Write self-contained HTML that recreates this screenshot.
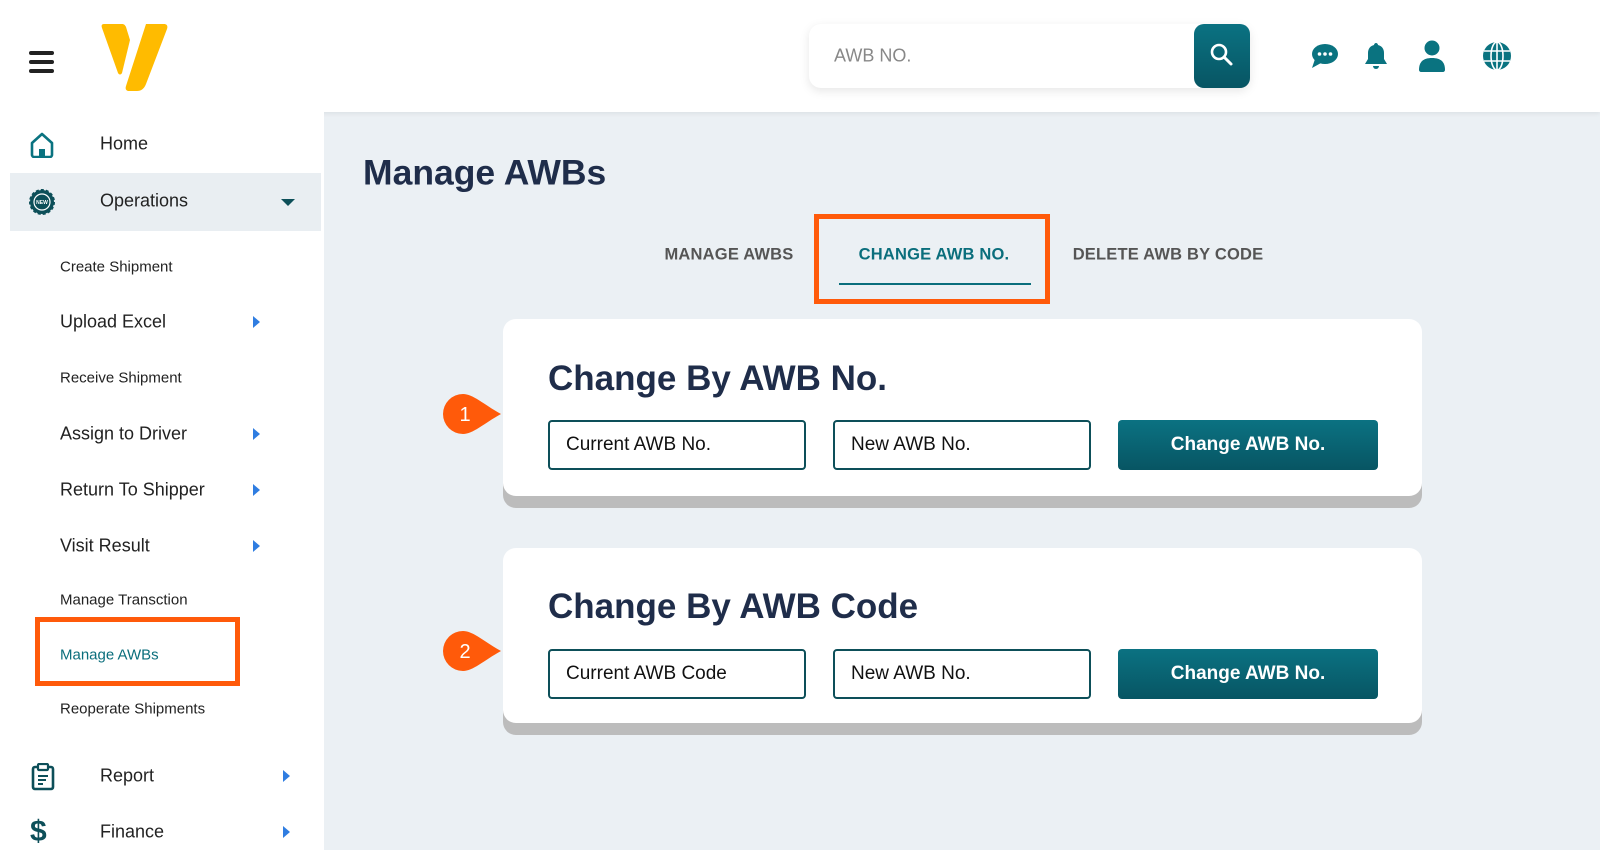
<!DOCTYPE html>
<html><head><meta charset="utf-8"><style>
*{box-sizing:border-box;margin:0;padding:0}
body{width:1600px;height:850px;overflow:hidden;background:#ebf0f4;font-family:"Liberation Sans",sans-serif;position:relative;color:#1e2430}
.abs{position:absolute}
.header{left:0;top:0;width:1600px;height:112px;background:#fff;box-shadow:0 2px 4px rgba(0,0,0,.06)}
.side{left:0;top:112px;width:324px;height:738px;background:#fff}
.sub{position:absolute;left:60px;font-size:15px;color:#222;transform:translateY(-50%)}
.sub.big{font-size:18px}
.arr{position:absolute;left:253px;width:0;height:0;border-top:6px solid transparent;border-bottom:6px solid transparent;border-left:7px solid #2f7de1;transform:translateY(-50%)}
.main{position:absolute;left:100px;font-size:18px;color:#222;transform:translateY(-50%)}
.card{position:absolute;left:503px;width:919px;background:#fff;border-radius:13px;box-shadow:0 12px 0 #bcbcbc}
.ct{position:absolute;left:45px;font-size:35px;font-weight:bold;color:#1f2d4a}
.inp{position:absolute;width:258px;height:50px;border:2px solid #0d4f59;border-radius:4px;font-size:19px;padding-left:16px;line-height:46px;color:#111}
.btn{position:absolute;width:260px;height:50px;border-radius:4px;background:linear-gradient(#0b7282,#075563);color:#fff;font-weight:bold;font-size:19px;text-align:center;line-height:50px}
.tab{position:absolute;top:255px;transform:translate(-50%,-50%);font-size:16.5px;font-weight:bold;color:#555;letter-spacing:.2px}
</style></head><body>
<div class="abs header"></div>
<div class="abs" style="left:29px;top:51px;width:25px;height:4px;background:#222;border-radius:2px"></div>
<div class="abs" style="left:29px;top:60px;width:25px;height:4px;background:#222;border-radius:2px"></div>
<div class="abs" style="left:29px;top:69px;width:25px;height:4px;background:#222;border-radius:2px"></div>
<svg class="abs" style="left:100px;top:22px" width="68" height="70" viewBox="0 0 68 70"><path d="M4 2h18c2 0 3 1 4 3l4 13-8 33c-1 2-3 2-4 0L2 6C1 3 2 2 4 2z" fill="#ffbb00"/><path d="M46 2h18c3 0 4 2 3 5L46 62c-2 5-5 7-9 7H29c-3 0-4-2-3-5z" fill="#ffbb00"/></svg>
<div class="abs" style="left:809px;top:24px;width:441px;height:64px;background:#fff;border-radius:12px;box-shadow:0 3px 10px rgba(0,0,0,.1)"></div>
<div class="abs" style="left:834px;top:56px;transform:translateY(-50%);font-size:18px;color:#888">AWB NO.</div>
<div class="abs" style="left:1194px;top:24px;width:56px;height:64px;border-radius:10px;background:linear-gradient(#0b7282,#075563)"></div>
<svg class="abs" style="left:1209px;top:42px" width="26" height="26" viewBox="0 0 26 26"><circle cx="10" cy="10" r="7" stroke="#fff" stroke-width="2.6" fill="none"/><path d="M15 15l7 7" stroke="#fff" stroke-width="3" stroke-linecap="round"/></svg>
<svg class="abs" style="left:1311px;top:43px" width="28" height="26" viewBox="0 0 28 26"><ellipse cx="14" cy="11" rx="13" ry="10" fill="#0a7380"/><path d="M4 16L1 25 10 20z" fill="#0a7380"/><circle cx="8.5" cy="11" r="1.8" fill="#fff"/><circle cx="14" cy="11" r="1.8" fill="#fff"/><circle cx="19.5" cy="11" r="1.8" fill="#fff"/></svg>
<svg class="abs" style="left:1364px;top:42px" width="24" height="28" viewBox="0 0 24 28"><path d="M12 1c1 0 2 1 2 2 4 1 6 4 6 8v6l3 5H1l3-5v-6c0-4 2-7 6-8 0-1 1-2 2-2z" fill="#0a7380"/><path d="M9 24h6a3 3 0 01-6 0z" fill="#0a7380"/></svg>
<svg class="abs" style="left:1418px;top:40px" width="28" height="32" viewBox="0 0 28 32"><circle cx="14" cy="8" r="7.5" fill="#0a7380"/><path d="M1 30c0-8 4-12 13-12s13 4 13 12c0 1-1 2-2 2H3c-1 0-2-1-2-2z" fill="#0a7380"/></svg>
<svg class="abs" style="left:1482px;top:41px" width="30" height="30" viewBox="0 0 30 30"><circle cx="15" cy="15" r="14" fill="#0a7380"/><g stroke="#fff" stroke-width="1.6" fill="none"><ellipse cx="15" cy="15" rx="6" ry="14"/><path d="M15 1v28M2 10h26M2 20h26"/></g></svg>

<div class="abs side"></div>
<svg class="abs" style="left:29px;top:132px" width="26" height="26" viewBox="0 0 26 26"><path d="M3 11L13 2l10 9v12c0 1-1 2-2 2H5c-1 0-2-1-2-2z" stroke="#0a7380" stroke-width="2.6" fill="none" stroke-linejoin="round"/><rect x="10" y="17" width="6" height="8" fill="#0a7380"/></svg>
<div class="main" style="top:144px">Home</div>
<div class="abs" style="left:10px;top:173px;width:311px;height:58px;background:#e9eef2"></div>
<svg class="abs" style="left:29px;top:189px" width="26" height="26" viewBox="0 0 26 26"><circle cx="13" cy="13" r="12" fill="#0d4f59" stroke="#0d4f59" stroke-width="2" stroke-dasharray="3 2"/><circle cx="13" cy="13" r="8" fill="#0d4f59" stroke="#fff" stroke-width="1.2"/><text x="13" y="15" font-size="5" fill="#fff" text-anchor="middle" font-family="Liberation Sans" font-weight="bold">NEW</text></svg>
<div class="main" style="top:201px">Operations</div>
<div class="abs" style="left:281px;top:199px;border-left:7px solid transparent;border-right:7px solid transparent;border-top:7px solid #0d4f59"></div>
<div class="sub" style="top:267px">Create Shipment</div>
<div class="sub big" style="top:322px">Upload Excel</div><div class="arr" style="top:322px"></div>
<div class="sub" style="top:378px">Receive Shipment</div>
<div class="sub big" style="top:434px">Assign to Driver</div><div class="arr" style="top:434px"></div>
<div class="sub big" style="top:490px">Return To Shipper</div><div class="arr" style="top:490px"></div>
<div class="sub big" style="top:546px">Visit Result</div><div class="arr" style="top:546px"></div>
<div class="sub" style="top:600px">Manage Transction</div>
<div class="sub" style="top:655px;color:#0a6e7c">Manage AWBs</div>
<div class="abs" style="left:35px;top:617px;width:205px;height:69px;border:5px solid #ff5a0a"></div>
<div class="sub" style="top:709px">Reoperate Shipments</div>
<svg class="abs" style="left:31px;top:763px" width="24" height="28" viewBox="0 0 24 28"><rect x="2" y="4" width="20" height="22" rx="2" stroke="#0d4f59" stroke-width="2.6" fill="none"/><rect x="7" y="1" width="10" height="6" rx="1" stroke="#0d4f59" stroke-width="2.2" fill="#fff"/><path d="M7 13h10M7 17h8M7 21h5" stroke="#0d4f59" stroke-width="2"/></svg>
<div class="main" style="top:776px">Report</div><div class="arr" style="left:283px;top:776px"></div>
<div class="abs" style="left:30px;top:815px;font-size:30px;font-weight:bold;color:#0d4f59;line-height:34px">$</div>
<div class="main" style="top:832px">Finance</div><div class="arr" style="left:283px;top:832px"></div>

<div class="abs" style="left:363px;top:173px;transform:translateY(-50%);font-size:35.5px;font-weight:bold;color:#1f2d4a">Manage AWBs</div>
<div class="tab" style="left:729px">MANAGE AWBS</div>
<div class="tab" style="left:934px;color:#0a6e7c">CHANGE AWB NO.</div>
<div class="tab" style="left:1168px">DELETE AWB BY CODE</div>
<div class="abs" style="left:839px;top:283px;width:192px;height:2px;background:#0a6e7c"></div>
<div class="abs" style="left:814px;top:214px;width:236px;height:90px;border:5px solid #ff5a0a"></div>

<div class="card" style="top:319px;height:177px">
<div class="ct" style="top:40px">Change By AWB No.</div>
<div class="inp" style="left:45px;top:101px">Current AWB No.</div>
<div class="inp" style="left:330px;top:101px">New AWB No.</div>
<div class="btn" style="left:615px;top:101px">Change AWB No.</div>
</div>
<div class="card" style="top:548px;height:175px">
<div class="ct" style="top:39px">Change By AWB Code</div>
<div class="inp" style="left:45px;top:101px">Current AWB Code</div>
<div class="inp" style="left:330px;top:101px">New AWB No.</div>
<div class="btn" style="left:615px;top:101px">Change AWB No.</div>
</div>
<svg class="abs" style="left:441px;top:392px" width="62" height="44" viewBox="0 0 62 44"><path d="M22 2c10 0 20 10 38 20C42 32 32 42 22 42A20 20 0 0122 2z" fill="#ff5a0a"/><text x="24" y="29" font-size="20" fill="#fff" text-anchor="middle" font-family="Liberation Sans">1</text></svg>
<svg class="abs" style="left:441px;top:629px" width="62" height="44" viewBox="0 0 62 44"><path d="M22 2c10 0 20 10 38 20C42 32 32 42 22 42A20 20 0 0122 2z" fill="#ff5a0a"/><text x="24" y="29" font-size="20" fill="#fff" text-anchor="middle" font-family="Liberation Sans">2</text></svg>
</body></html>
